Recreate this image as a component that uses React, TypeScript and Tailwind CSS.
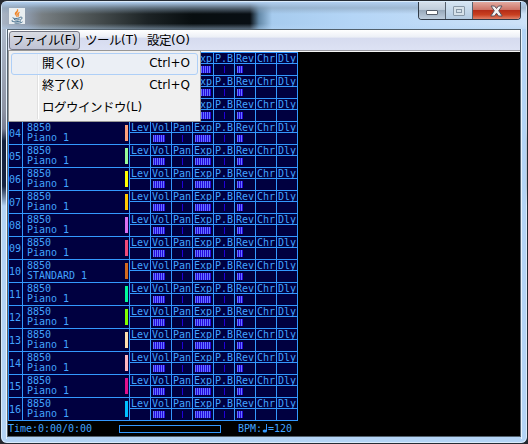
import React from "react";

const tracks: { name: string; color: string }[] = [
  { name: "Piano 1", color: "#ff69b4" },
  { name: "Piano 1", color: "#9370db" },
  { name: "Piano 1", color: "#00bfff" },
  { name: "Piano 1", color: "#ffa07a" },
  { name: "Piano 1", color: "#98fb98" },
  { name: "Piano 1", color: "#ffff00" },
  { name: "Piano 1", color: "#ffc800" },
  { name: "Piano 1", color: "#da70f0" },
  { name: "Piano 1", color: "#f04878" },
  { name: "STANDARD 1", color: "#d2691e" },
  { name: "Piano 1", color: "#00fa9a" },
  { name: "Piano 1", color: "#7fff00" },
  { name: "Piano 1", color: "#ffdead" },
  { name: "Piano 1", color: "#ffb6c1" },
  { name: "Piano 1", color: "#e0108c" },
  { name: "Piano 1", color: "#00bfff" },
];

const meters: { label: string; bars: number; pad: string }[] = [
  { label: "Lev", bars: 0, pad: "" },
  { label: "Vol", bars: 6, pad: "pl-[2px]" },
  { label: "Pan", bars: 1, pad: "pl-[10px]" },
  { label: "Exp", bars: 8, pad: "pl-[2px]" },
  { label: "P.B", bars: 1, pad: "pl-[10px]" },
  { label: "Rev", bars: 3, pad: "pl-[2px]" },
  { label: "Chr", bars: 0, pad: "" },
  { label: "Dly", bars: 0, pad: "" },
];

function Meter({ label, bars, pad }: { label: string; bars: number; pad: string }) {
  return (
    <div className="w-[21px] border-r border-[#3399ff]">
      <div className="h-[11px] border-b border-[#3399ff] pl-px leading-[11px]">{label}</div>
      <div className={`flex h-[11px] pt-[2px] ${pad}`}>
        {Array.from({ length: bars }, (_, i) => (
          <i
            key={i}
            className={`h-[7px] ${bars === 1 ? "w-px bg-[#2000d8]" : "w-[2px] border-r border-[#2408dc] bg-[#6674ff]"}`}
          />
        ))}
      </div>
    </div>
  );
}

function Track({ index }: { index: number }) {
  const t = tracks[index];
  return (
    <div className="flex h-[23px] w-[290px] border-b border-l border-[#3399ff] bg-[#000040]">
      <div className="w-[14px] border-r border-[#3399ff] leading-[24px]">{String(index + 1).padStart(2, "0")}</div>
      <div className="flex w-[107px] justify-between border-r border-[#3399ff] pl-[4px] pr-px">
        <div className="pt-px leading-[10px]">
          <div>8850</div>
          <div>{t.name}</div>
        </div>
        <i className="mt-[3px] h-4 w-[3px]" style={{ backgroundColor: t.color }} />
      </div>
      {meters.map((m) => (
        <Meter key={m.label} {...m} />
      ))}
    </div>
  );
}

function MenuText({ jp, latin }: { jp: string; latin: string }) {
  return (
    <span className="flex items-center whitespace-nowrap leading-[16px]">
      <span className="font-['Noto_Sans_CJK_JP',sans-serif] text-[12.5px] tracking-[-0.5px]">{jp}</span>
      <span>{latin}</span>
    </span>
  );
}

function JavaIcon() {
  return (
    <svg width="16" height="16" viewBox="0 0 16 16" className="block">
      <rect width="16" height="16" fill="#e9eef1" />
      <path d="M8.5 1C9 3 5 4.3 6.2 6.5L8 9C7.7 7 6.7 6.2 8 4.8C9 3.7 9.4 2.3 8.500 1M10.700 4C8 5 7.600 6.500 9 8L8.700 9C11 7.500 8.500 6.500 10.700 4" fill="#f08222" stroke="#f08222" strokeWidth=".4" />
      <path d="M4 9.500C2.500 10.500 8 11 11 9.700M5 11.300C6 12.300 9 12.200 10.500 11.500M11 9.300C14 8.500 13.500 11 11.300 11.800M3.500 12.300C.5 13.500 7 14.500 12 12.900M5.500 15C9 15.500 12.500 15 13.500 13.800" fill="none" stroke="#426b8a" strokeWidth="1" />
    </svg>
  );
}

function TitleBar() {
  return (
    <div className="relative flex h-[27px] justify-between bg-[linear-gradient(180deg,#b4d4f500_0,#b4d4f500_80%,#b4d4f577_100%),linear-gradient(90deg,#a9b4c4_0,#8c98a9_26px,#787f83_40px,#535a5b_80px,#1c2325_145px,#080e10_190px,#080e13_248px,#6388a7_257px,#a6cbee_270px,#b4d5f6_350px,#cde2f8_100%)]">
      <div className="absolute inset-x-0 top-0 h-[12px] bg-linear-to-b from-[#b1cff0] via-[#8ba2b9]/60 to-transparent" />
      <div className="relative pl-[7px] pt-[6px]"><JavaIcon /></div>
      <div className="relative mr-[5px] flex h-[18px] overflow-hidden rounded-b-[4px] border border-t-0 border-[#303a47]">
        <div className="flex w-[27px] items-center justify-center border-r border-[#56616e] bg-[linear-gradient(#d5e0eb_0,#c0cddb_44%,#97a8ba_48%,#becddd_100%)] pt-[4px]">
          <i className="h-[5px] w-[12px] rounded-[1px] border border-[#555d69] bg-white" />
        </div>
        <div className="flex w-[27px] items-center justify-center border-r border-[#56616e] bg-linear-to-b from-[#d5e4f2] to-[#b4cbe1]">
          <div className="flex h-[10px] w-[12px] items-center justify-center rounded-[1px] border border-[#8999a8] bg-[#d6e1e9]">
            <i className="h-[4px] w-[6px] border border-[#8999a8]" />
          </div>
        </div>
        <div className="flex w-[47px] items-center justify-center bg-[linear-gradient(#e2aaa0_0,#cd7568_45%,#b52d18_50%,#c94020_75%,#df8068_100%)]">
          <svg width="13" height="12" viewBox="0 0 13 12">
            <path d="M1 1H4.500L6.500 3.500L8.500 1H12L8.700 5.800L12.200 11H8.500L6.500 8.200L4.500 11H.8L4.300 5.800Z" fill="#f5f3f3" stroke="#59545f" strokeWidth="1" />
          </svg>
        </div>
      </div>
    </div>
  );
}

function MenuBar() {
  return (
    <div className="flex h-[21px] items-center border-b border-[#9999a0] bg-[linear-gradient(#fff_0,#eceff6_36%,#d6dbef_40%,#dde2f4_100%)]">
      <div className="ml-px flex h-[19px] w-[71px] items-center rounded-[3px] border border-[#747683] bg-linear-to-b from-[#d9dbe2] to-[#bfc3d5] pl-[2px]">
        <MenuText jp="ファイル" latin="(F)" />
      </div>
      <div className="w-[64px] pl-[5px]"><MenuText jp="ツール" latin="(T)" /></div>
      <div className="pl-[3px]"><MenuText jp="設定" latin="(O)" /></div>
    </div>
  );
}

const items = [
  { jp: "開く", latin: "(O)", key: "Ctrl+O" },
  { jp: "終了", latin: "(X)", key: "Ctrl+Q" },
  { jp: "ログウインドウ", latin: "(L)", key: "" },
];

function FileMenu() {
  return (
    <div className="absolute left-0 top-[20px] h-[72px] w-[193px] border border-[#979797] bg-[#f0f0f0] p-[2px]">
      <div className="absolute bottom-[2px] left-[28px] top-[2px] w-[2px] border-l border-[#e0e0e0] bg-white" />
      {items.map((it, i) => (
        <div
          key={it.jp}
          className={`relative flex h-[22px] w-[187px] items-center justify-between rounded-[3px] border pb-[2px] pl-[30px] pr-[7px] ${i === 0 ? "border-[#aecff7] bg-[#e8eef6]/70" : "border-transparent"}`}
        >
          <MenuText jp={it.jp} latin={it.latin} />
          <span>{it.key}</span>
        </div>
      ))}
    </div>
  );
}

export default function App() {
  return (
    <div className="h-[444px] w-[528px] overflow-hidden bg-[#25282e]">
      <div className="h-[444px] w-[528px] overflow-hidden rounded-[7px] border border-[#262c34] bg-[linear-gradient(#b9c7d9_0,#8c93a3_110px,#777d91_128px,#13213d_140px,#16233f_185px,#b4d4f5_205px,#b4d4f5_100%)] font-['DejaVu_Sans',sans-serif] text-[12px] text-black">
        <div className="h-full rounded-[6px] border border-[#e4f0fb]/80 bg-[linear-gradient(90deg,transparent_8px,#b4d4f5_60%)]">
          <TitleBar />
          <div className="ml-[4px] h-[410px] w-[516px] border-x border-[#e8f3fd]">
            <div className="h-[408px] w-[514px] border border-[#52616d] bg-black">
              <div className="relative">
                <MenuBar />
                <div className="h-px bg-[#f5f5f5]" />
                <main className="font-['DejaVu_Sans_Mono',monospace] text-[10px] tracking-[-0.02px] text-[#42a4ff]">
                  <div className="w-[290px] border-t border-[#3399ff]">
                    {tracks.map((_, i) => <Track key={i} index={i} />)}
                  </div>
                  <footer className="flex h-[15px] items-center">
                    <span className="w-[111px]">Time:0:00/0:00</span>
                    <div className="h-[8px] w-[102px] border border-[#3399ff]" />
                    <span className="ml-[17px]">BPM:</span>
                    <svg width="6" height="9" viewBox="0 0 6 9"><path d="M4 0H5V7H4Z" fill="#3399ff" /><ellipse cx="2.800" cy="7" rx="2.200" ry="1.600" fill="#3399ff" /></svg>
                    <span>=120</span>
                  </footer>
                </main>
                <FileMenu />
              </div>
            </div>
          </div>
        </div>
      </div>
    </div>
  );
}
